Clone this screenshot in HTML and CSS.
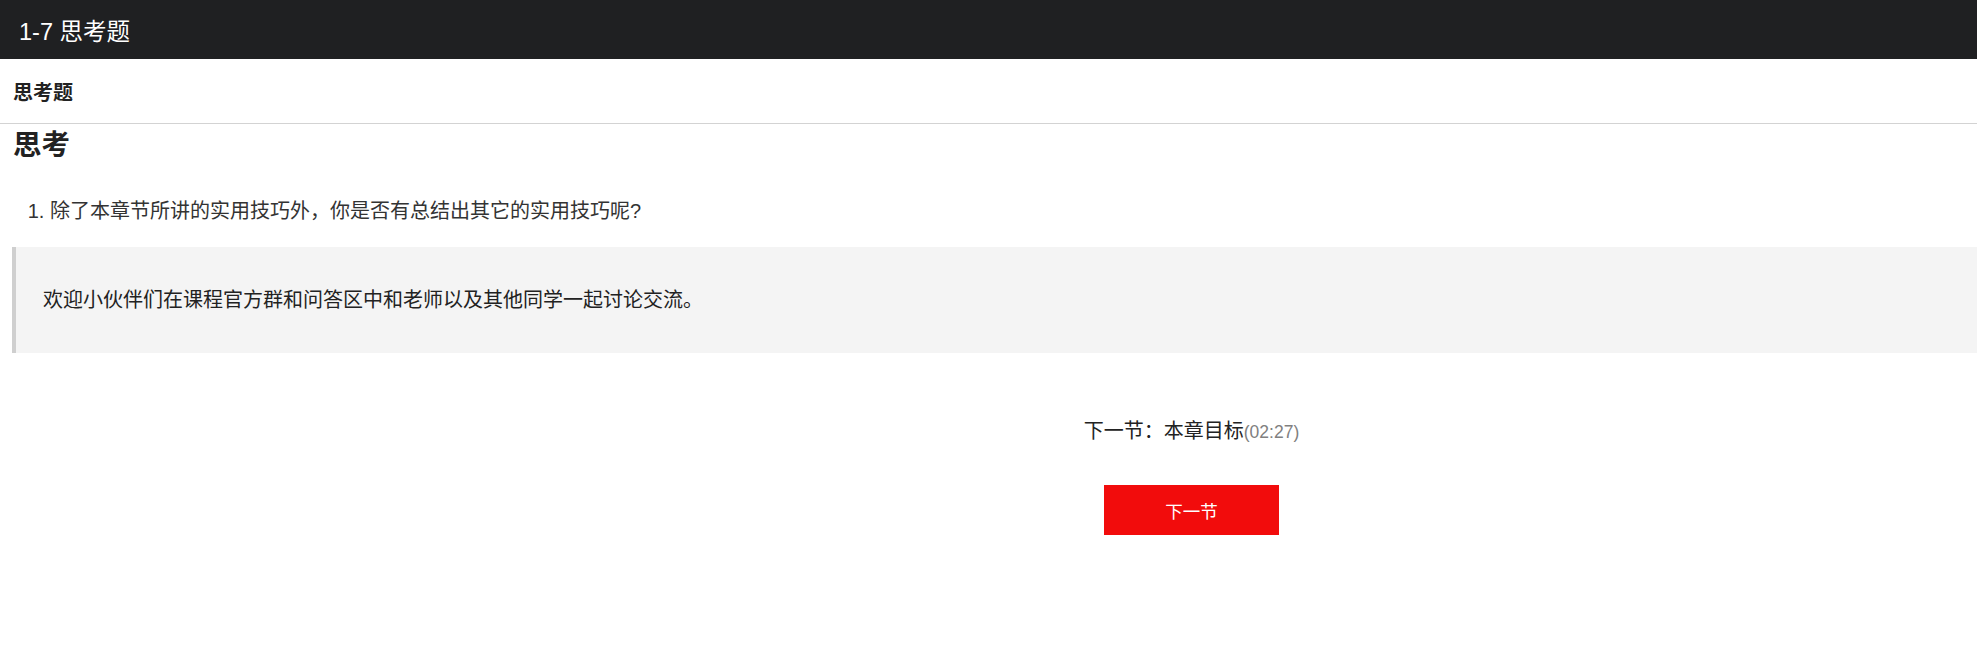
FILE: index.html
```html
<!DOCTYPE html>
<html lang="zh-CN">
<head>
    <meta charset="UTF-8">
    <meta name="viewport" content="width=device-width, initial-scale=1.0">
    <title>1-7 思考题</title>
    <link rel="stylesheet" href="styles.css">
</head>
<body>
    <header class="topbar">1-7 思考题</header>
    <div class="subbar">思考题</div>
    <div class="content">
        <h2 class="title">思考</h2>
        <ol class="questions">
            <li>除了本章节所讲的实用技巧外，你是否有总结出其它的实用技巧呢?</li>
        </ol>
        <blockquote class="note">欢迎小伙伴们在课程官方群和问答区中和老师以及其他同学一起讨论交流。</blockquote>
    </div>
    <div class="next">
        <p class="next-label">下一节：本章目标<span class="time">(02:27)</span></p>
        <a class="next-btn" href="#">下一节</a>
    </div>
</body>
</html>
```

FILE: styles.css
```css
body {
    margin: 0;
    font-family: "Liberation Sans", "Noto Sans CJK SC", sans-serif;
    color: #222;
    background: #fff;
}

.topbar {
    height: 59px;
    display: flex;
    align-items: center;
    padding-left: 19px;
    background: #1f2022;
    color: #fff;
    font-size: 23.5px;
}

.subbar {
    height: 64px;
    display: flex;
    align-items: center;
    padding-left: 13px;
    border-bottom: 1px solid #d3d3d3;
    font-size: 20px;
    font-weight: bold;
}

.content {
    padding-left: 12px;
}

.title {
    margin: 0;
    padding-left: 1px;
    font-size: 28.5px;
    line-height: 42px;
}

.questions {
    margin: 30px 0 0;
    padding-left: 38px;
    font-size: 20px;
    line-height: 30px;
    color: #333;
}

.note {
    margin: 21px 0 0;
    padding: 38px 27px;
    border-left: 4px solid #cfcfcf;
    background: #f4f4f4;
    font-size: 20px;
    line-height: 30px;
    color: #222;
}

.next {
    display: flex;
    flex-direction: column;
    align-items: center;
    padding-left: 406px;
}

.next-label {
    margin: 63px 0 0;
    font-size: 20px;
    line-height: 30px;
}

.time {
    font-size: 17.5px;
    color: #808080;
}

.next-btn {
    margin-top: 38px;
    width: 175px;
    height: 50px;
    display: flex;
    align-items: center;
    justify-content: center;
    background: #f20c0c;
    color: #fff;
    font-size: 17.5px;
    text-decoration: none;
}
```
